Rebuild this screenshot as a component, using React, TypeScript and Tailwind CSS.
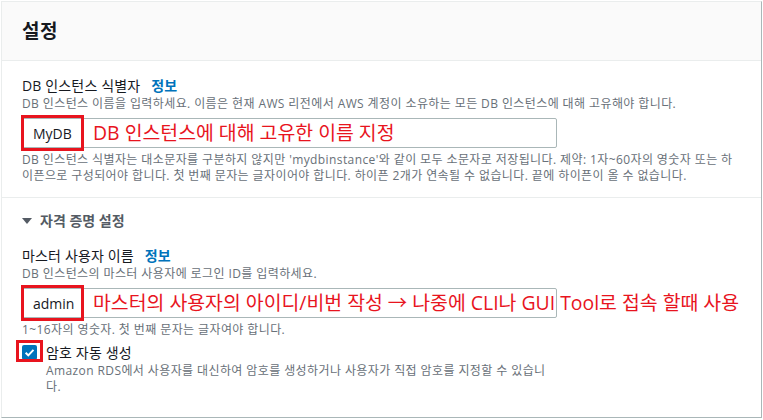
import React from "react";

const font = { fontFamily: '"Open Sans", "Noto Sans CJK KR", sans-serif' };

function Annotated({ value, note }: { value: string; note: string }) {
  return (
    <div className="relative h-[30px] w-[535px] border border-[#aab7b8] rounded-[2px] bg-white">
      <span className="absolute left-[10px] top-0 h-full flex items-center text-[14px] text-[#16191f]">
        {value}
      </span>
      <span className="pointer-events-none absolute -left-[2px] -top-[4px] h-[36px] w-[63px] border-[3px] border-[#e8141e]" />
      <span className="absolute left-[70px] top-0 h-full flex items-center whitespace-nowrap text-[19.4px] text-[#e8141e]">
        {note}
      </span>
    </div>
  );
}

function Label({ text }: { text: string }) {
  return (
    <div className="flex items-center gap-[11px] text-[14px] leading-[20px] text-[#16191f] tracking-[0.15px]">
      <span>{text}</span>
      <span className="text-[14px] font-bold text-[#0073bb]">정보</span>
    </div>
  );
}

export default function App() {
  return (
    <div className="w-[763px] h-[420px] bg-white pl-px pt-px" style={font}>
      <div className="w-[761px] h-[417px] border border-[#eaeded] border-r-[#aab7b8] border-b-[#aab7b8] bg-white flex flex-col">
        <div className="h-[59px] shrink-0 bg-[#fafafa] border-b border-[#eaeded] px-[20px] flex items-center">
          <h2 className="text-[19px] font-bold text-[#16191f] tracking-[0.5px]">설정</h2>
        </div>

        <div className="px-[20px] pt-[15px] pb-[13px] border-b border-[#eaeded]">
          <Label text="DB 인스턴스 식별자" />
          <p className="text-[12px] leading-[16px] text-[#687078] tracking-[0.4px]">
            DB 인스턴스 이름을 입력하세요. 이름은 현재 AWS 리전에서 AWS 계정이 소유하는 모든 DB 인스턴스에 대해 고유해야 합니다.
          </p>
          <div className="mt-[6px]">
            <Annotated value="MyDB" note="DB 인스턴스에 대해 고유한 이름 지정" />
          </div>
          <p className="mt-[4px] max-w-[712px] text-[12px] leading-[16px] text-[#687078] tracking-[0.4px]">
            DB 인스턴스 식별자는 대소문자를 구분하지 않지만 'mydbinstance'와 같이 모두 소문자로 저장됩니다. 제약: 1자~60자의 영숫자 또는 하이픈으로 구성되어야 합니다. 첫 번째 문자는 글자이어야 합니다. 하이픈 2개가 연속될 수 없습니다. 끝에 하이픈이 올 수 없습니다.
          </p>
        </div>

        <div className="px-[20px] pt-[13px]">
          <div className="flex items-center gap-[8px] text-[14px] leading-[20px] font-bold text-[#545b64]">
            <svg width="10" height="6" viewBox="0 0 10 6" className="text-[#545b64]">
              <path d="M0 0h10L5 6z" fill="currentColor" />
            </svg>
            <span>자격 증명 설정</span>
          </div>

          <div className="mt-[15px]">
            <Label text="마스터 사용자 이름" />
            <p className="text-[12px] leading-[16px] text-[#687078] tracking-[0.4px]">
              DB 인스턴스의 마스터 사용자에 로그인 ID를 입력하세요.
            </p>
            <div className="mt-[6px]">
              <Annotated value="admin" note="마스터의 사용자의 아이디/비번 작성 → 나중에 CLI나 GUI Tool로 접속 할때 사용" />
            </div>
            <p className="mt-[4px] text-[12px] leading-[16px] text-[#687078] tracking-[0.4px]">
              1~16자의 영숫자. 첫 번째 문자는 글자여야 합니다.
            </p>
          </div>

          <div className="mt-[5px] flex items-start gap-[9px]">
            <div className="relative mt-[2px] h-[15px] w-[15px] shrink-0">
              <span className="flex h-[15px] w-[15px] items-center justify-center rounded-[2px] bg-[#0073bb]">
                <svg width="11" height="11" viewBox="0 0 10 10">
                  <path d="M1.5 5.2l2.4 2.4L8.6 2.6" fill="none" stroke="white" strokeWidth="1.8" />
                </svg>
              </span>
              <span className="absolute -left-[6px] -top-[5px] h-[22px] w-[27px] border-[3px] border-[#e8141e]" />
            </div>
            <div className="max-w-[512px]">
              <div className="text-[14px] leading-[20px] text-[#16191f] tracking-[0.15px]">암호 자동 생성</div>
              <p className="text-[12px] leading-[16px] text-[#687078] tracking-[0.4px]">
                Amazon RDS에서 사용자를 대신하여 암호를 생성하거나 사용자가 직접 암호를 지정할 수 있습니다.
              </p>
            </div>
          </div>
        </div>
      </div>
    </div>
  );
}
